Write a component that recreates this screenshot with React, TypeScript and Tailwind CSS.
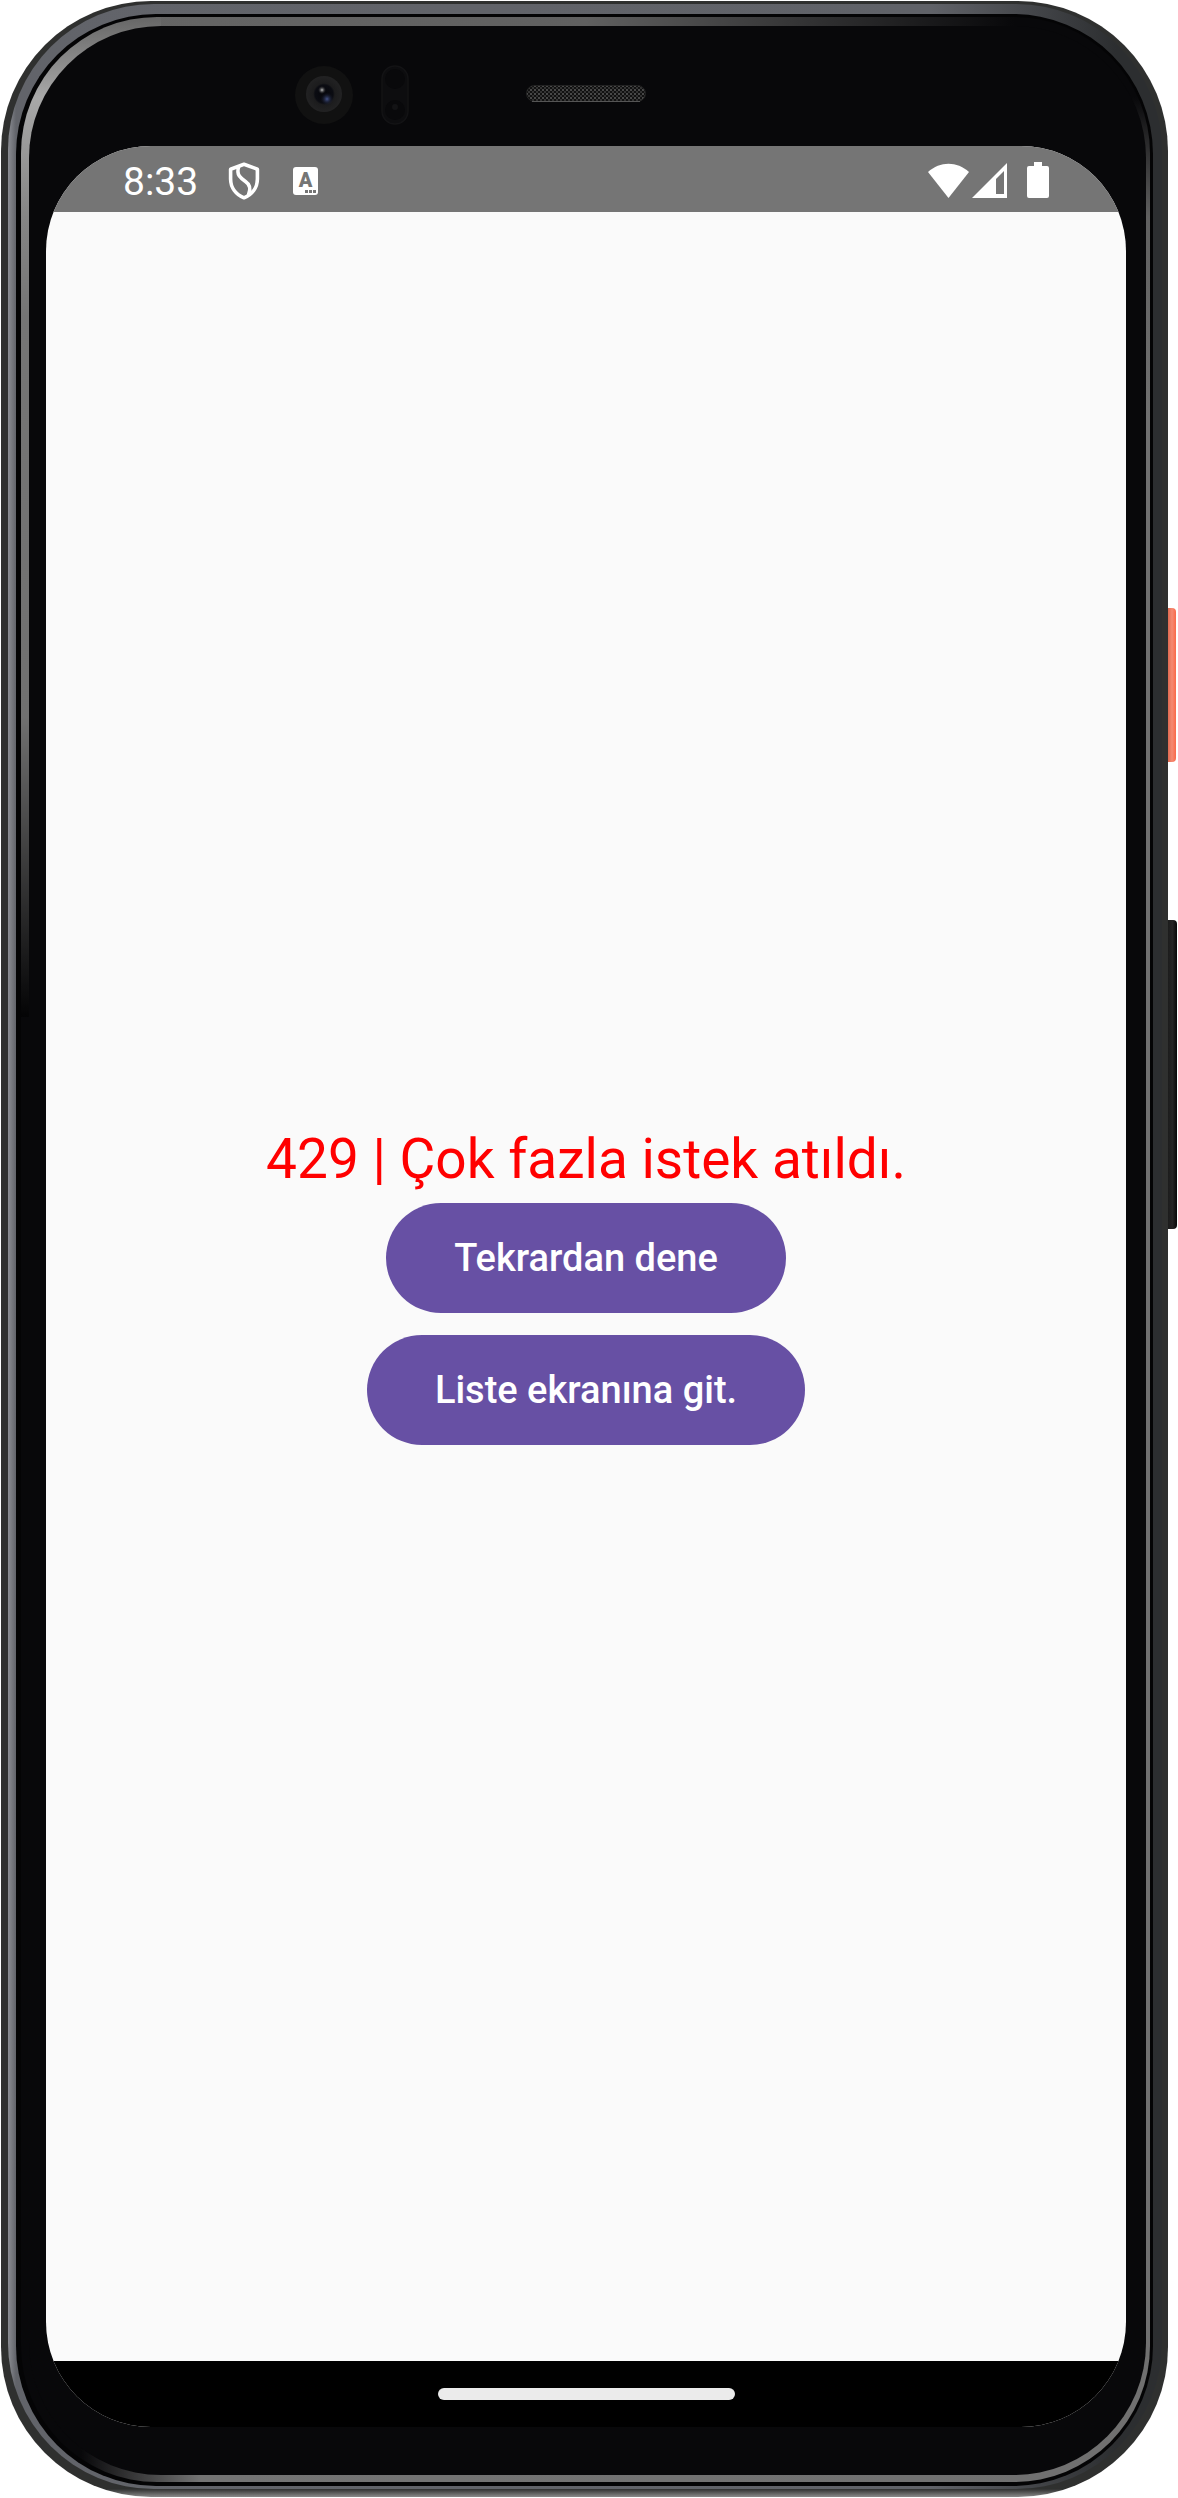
function ShieldIcon() {
  return (
    <svg viewBox="0 0 32 38" className="h-[38px] w-8" fill="none" stroke="white" strokeWidth="3.6" strokeLinejoin="round" strokeLinecap="round" aria-hidden="true">
      <path d="M16 2.2 L29.4 7.2 V17 C29.4 25.5 24 32.5 16 35.8 C8 32.5 2.6 25.5 2.6 17 V7.2 Z" />
      <path d="M10.6 5 C8 13 13 16.4 17.5 19.5 C22 22.6 23.2 26.4 20.6 32.4" />
    </svg>
  );
}

function LetterIcon() {
  return (
    <span className="relative flex h-7 w-[25px] justify-center rounded-[3px] bg-white text-[20px] leading-[26px] font-black text-[#757575]">
      A
      <span className="absolute right-[2px] bottom-[2px] flex gap-[1px]">
        <i className="size-[3px] bg-[#757575]" />
        <i className="size-[3px] bg-[#757575]" />
        <i className="size-[3px] bg-[#757575]" />
      </span>
    </span>
  );
}

function StatusBar() {
  return (
    <header className="flex h-[66px] items-center justify-between bg-[#757575] px-[77px] text-white">
      <div className="flex items-center pt-[4px]">
        <time className="w-[105px] pt-[2px] text-[39px] leading-[44px]">8:33</time>
        <ShieldIcon />
        <span className="pl-[33px]">
          <LetterIcon />
        </span>
      </div>
      <div className="flex items-center pt-[2px]">
        <svg viewBox="0 0 41 35" className="h-[35px] w-[41px]" fill="white" aria-hidden="true">
          <path d="M20.5 35 L0 9 C12 -2 29 -2 41 9 Z" />
        </svg>
        <svg viewBox="0 0 35 35" className="ml-[3px] h-[35px] w-[35px]" aria-hidden="true">
          <path fillRule="evenodd" d="M35 0 V35 H0 Z M32 8 L24 16 V31 H32 Z" fill="white" />
        </svg>
        <svg viewBox="0 0 22 36" className="ml-5 h-9 w-[22px]" fill="white" aria-hidden="true">
          <path d="M7 0 H15 V4 H20 Q22 4 22 6 V34 Q22 36 20 36 H2 Q0 36 0 34 V6 Q0 4 2 4 H7 Z" />
        </svg>
      </div>
    </header>
  );
}

function Camera() {
  return (
    <svg viewBox="0 0 116 60" className="h-[60px] w-[116px]" aria-hidden="true">
      <defs>
        <radialGradient id="lens">
          <stop offset="0" stopColor="#05060b" />
          <stop offset="0.5" stopColor="#0b0c12" />
          <stop offset="0.6" stopColor="#1c1c1d" />
          <stop offset="1" stopColor="#222223" />
        </radialGradient>
        <radialGradient id="blue">
          <stop offset="0" stopColor="#44538a" />
          <stop offset="1" stopColor="#0b0c12" stopOpacity="0" />
        </radialGradient>
        <radialGradient id="glint">
          <stop offset="0" stopColor="#c0c0c0" />
          <stop offset="1" stopColor="#333" stopOpacity="0" />
        </radialGradient>
      </defs>
      <circle cx="30" cy="30" r="29" fill="#111111" />
      <circle cx="30" cy="29" r="18" fill="url(#lens)" />
      <circle cx="33" cy="34" r="7" fill="url(#blue)" />
      <circle cx="28" cy="25" r="4" fill="url(#glint)" />
      <rect x="88" y="1" width="26" height="58" rx="13" fill="#0d0d0f" stroke="#131315" strokeWidth="1.5" />
      <circle cx="101" cy="14" r="10" fill="#09090b" />
      <circle cx="101" cy="45" r="10" fill="#09090b" />
      <circle cx="101" cy="42" r="3" fill="#131315" />
    </svg>
  );
}

function Speaker() {
  return (
    <svg viewBox="0 0 120 18" className="h-[18px] w-[120px]" aria-hidden="true">
      <defs>
        <pattern id="mesh" width="4" height="4" patternUnits="userSpaceOnUse">
          <rect width="4" height="4" fill="#111" />
          <rect width="2" height="2" fill="#484848" />
          <rect x="2" y="2" width="2" height="2" fill="#333" />
        </pattern>
      </defs>
      <rect x="0.5" y="0.5" width="119" height="16" rx="8" fill="url(#mesh)" stroke="#222" />
      <path d="M6 16.5 H114" stroke="#555" />
    </svg>
  );
}

function ActionButton({ label }: { label: string }) {
  return (
    <button type="button" className="h-[110px] rounded-full bg-[#6750a4] px-[68px] text-[38px] leading-[56px] font-medium text-white">
      {label}
    </button>
  );
}

export default function App() {
  return (
    <div className="flex min-h-screen bg-white py-[1px] pl-[1px] font-[Roboto,sans-serif]">
      <div className="flex flex-1 rounded-[150px] bg-[#2f302f] bg-[linear-gradient(0deg,#8a8a8a_0,#2f302f_8px)] pt-[3px] pr-[6px] pb-[8px] pl-[7px]">
        <div className="flex flex-1 rounded-[146px] bg-[linear-gradient(90deg,#8b8d93_0,#62646a_8px,#606268_80%,#2c2e30_96%)] pt-[10px] pr-[9px] pb-[3px] pl-[8px]">
          <div className="flex flex-1 rounded-[140px] bg-[#040405] pt-[3px] pr-[3px] pb-[4px] pl-[5px]">
            <div className="flex flex-1 rounded-[136px] bg-[#08080a] bg-[linear-gradient(180deg,#666666_0,#a8a8a8_80px,#858585_200px,#757575_300px,#707070_700px,#040405_1000px),linear-gradient(90deg,#666666_0,#606060_50%,#08080a_88%),linear-gradient(180deg,#08080a_80px,#606060_200px,#707070_400px,#707070_100%),linear-gradient(90deg,#08080a_60px,#747474_180px,#707070_100%)] bg-[size:140px_1000px,100%_80px,140px_100%,100%_100px] bg-[position:left_top,left_top,right_top,left_bottom] bg-no-repeat pt-[9px] pr-[4px] pb-[7px] pl-[8px]">
              <div className="flex flex-1 flex-col rounded-[132px] bg-[#08080a] pr-[20px] pb-[48px] pl-[17px]">
                <div className="grid h-[120px] shrink-0 grid-cols-[1fr_120px_1fr] items-start pt-[39px]">
                  <div className="flex justify-end pr-[116px]">
                    <Camera />
                  </div>
                  <div className="pt-[20px]">
                    <Speaker />
                  </div>
                </div>
                <div className="flex flex-1 flex-col overflow-hidden rounded-[105px] bg-[#fafafa]">
                  <StatusBar />
                  <main className="flex flex-1 flex-col items-center justify-center">
                    <p className="text-[55px] leading-[60px] text-[#ff0000]">429 | Çok fazla istek atıldı.</p>
                    <div className="flex flex-col items-center gap-[22px] pt-[14px]">
                      <ActionButton label="Tekrardan dene" />
                      <ActionButton label="Liste ekranına git." />
                    </div>
                  </main>
                  <footer className="flex h-[66px] items-center justify-center bg-black">
                    <div className="h-3 w-[297px] rounded-full bg-[#ebebeb]" />
                  </footer>
                </div>
              </div>
            </div>
          </div>
        </div>
      </div>
      <div className="flex w-[10px] shrink-0 flex-col pt-[607px]">
        <div className="h-[154px] w-[8px] rounded-r-[4px] bg-[linear-gradient(90deg,#e06a50,#f58a72_50%,#f9694a)]" />
        <div className="mt-[158px] h-[309px] w-[9px] rounded-r-[4px] bg-[linear-gradient(90deg,#1c1c1c,#242424_50%,#080808)]" />
      </div>
    </div>
  );
}
